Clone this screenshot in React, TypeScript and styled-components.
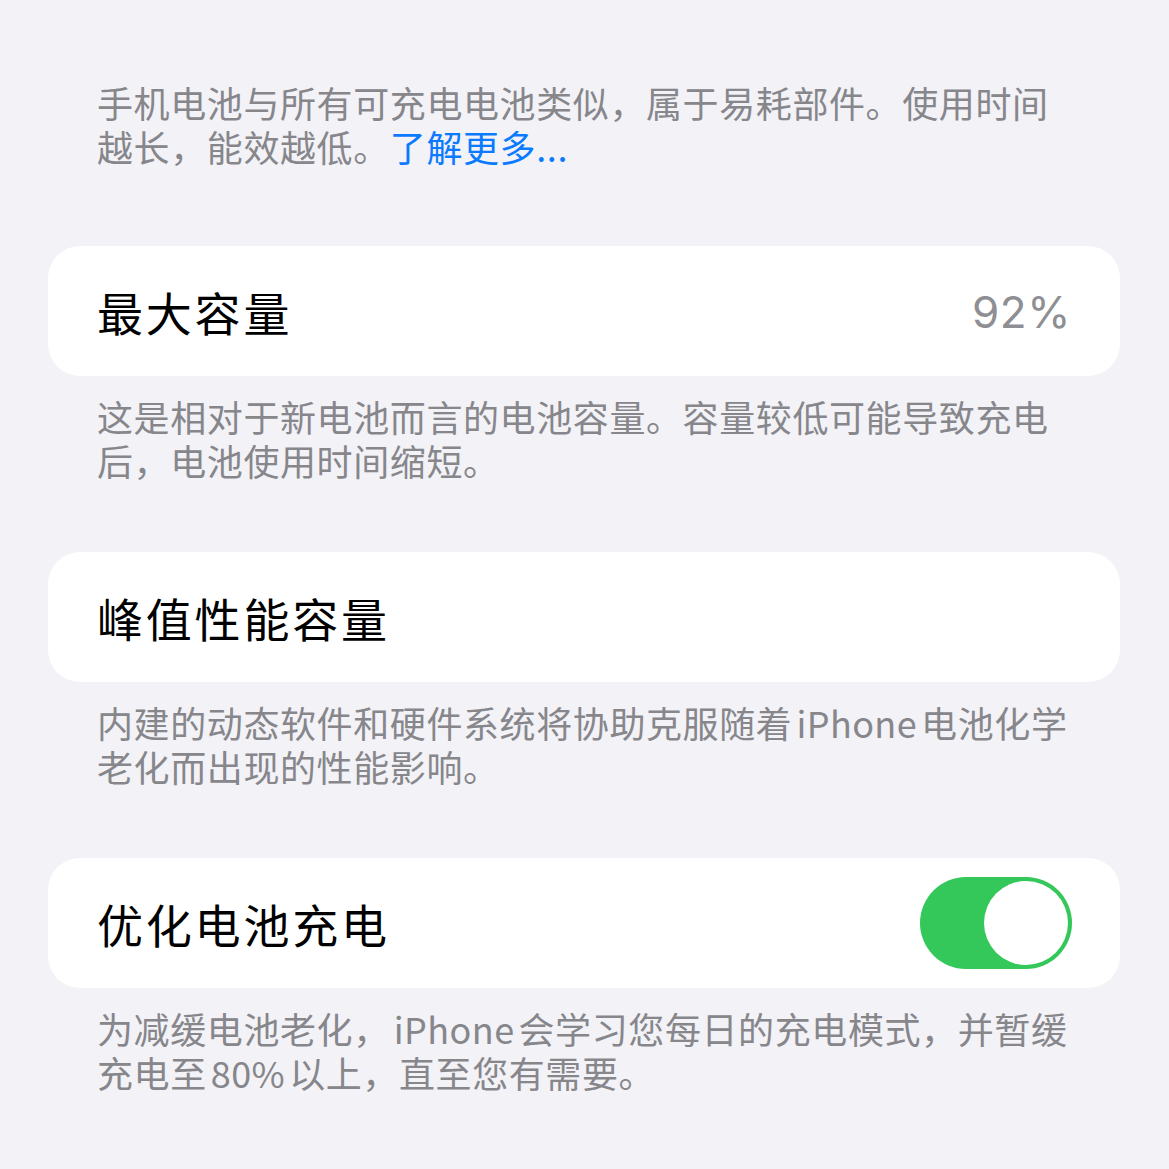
import styled, { createGlobalStyle } from 'styled-components';

const GlobalStyle = createGlobalStyle`
  html, body {
    margin: 0;
    padding: 0;
    background: #f2f2f7;
  }
  body {
    font-family: 'Noto Sans CJK SC', 'Noto Sans', sans-serif;
    -webkit-font-smoothing: antialiased;
  }
`;

const Page = styled.main`
  width: 1169px;
  min-height: 1169px;
  box-sizing: border-box;
  padding: 80px 49px 0 48px;
  display: flex;
  flex-direction: column;
`;

const Footnote = styled.p<{ $after?: number }>`
  margin: 0 0 ${(p) => p.$after ?? 70}px;
  padding: 0 48px 0 49px;
  font-size: 36px;
  line-height: 44px;
  letter-spacing: 0.6px;
  color: #86868b;
  white-space: nowrap;
`;

/* latin runs inside CJK text get a little breathing room on both sides */
const Latin = styled.span`
  margin: 0 4px;
  letter-spacing: 0.4px;
`;

const Link = styled.span`
  color: #0a7aff;
`;

const Card = styled.section`
  height: 130px;
  box-sizing: border-box;
  padding: 0 49px;
  background: #ffffff;
  border-radius: 32px;
  display: flex;
  align-items: center;
  justify-content: space-between;
  margin-bottom: 18px;
`;

const Title = styled.span`
  font-size: 46px;
  letter-spacing: 2.8px;
  color: #000000;
  line-height: 1;
`;

const Value = styled.span`
  font-family: 'Inter', 'Noto Sans', sans-serif;
  font-size: 44px;
  letter-spacing: 0.6px;
  color: #8e8e93;
  padding-top: 2px;
`;

const Switch = styled.button<{ $on: boolean }>`
  position: relative;
  width: 152px;
  height: 92px;
  margin-right: -1px;
  border: none;
  border-radius: 46px;
  padding: 0;
  background: ${(p) => (p.$on ? '#34c759' : '#e9e9eb')};
  cursor: pointer;
`;

const Knob = styled.span<{ $on: boolean }>`
  position: absolute;
  top: 4px;
  left: ${(p) => (p.$on ? '64px' : '4px')};
  width: 84px;
  height: 84px;
  border-radius: 50%;
  background: #ffffff;
`;

const App = () => {
  return (
    <>
      <GlobalStyle />
      <Page>
        <Footnote $after={78}>
          手机电池与所有可充电电池类似，属于易耗部件。使用时间
          <br />
          越长，能效越低。<Link>了解更多...</Link>
        </Footnote>

        <Card>
          <Title>最大容量</Title>
          <Value>92%</Value>
        </Card>
        <Footnote>
          这是相对于新电池而言的电池容量。容量较低可能导致充电
          <br />
          后，电池使用时间缩短。
        </Footnote>

        <Card>
          <Title>峰值性能容量</Title>
        </Card>
        <Footnote>
          内建的动态软件和硬件系统将协助克服随着<Latin>iPhone</Latin>电池化学
          <br />
          老化而出现的性能影响。
        </Footnote>

        <Card>
          <Title>优化电池充电</Title>
          <Switch $on aria-label='优化电池充电'>
            <Knob $on />
          </Switch>
        </Card>
        <Footnote>
          为减缓电池老化，<Latin>iPhone</Latin>会学习您每日的充电模式，并暂缓
          <br />
          充电至<Latin>80%</Latin>以上，直至您有需要。
        </Footnote>
      </Page>
    </>
  );
};

export default App;
